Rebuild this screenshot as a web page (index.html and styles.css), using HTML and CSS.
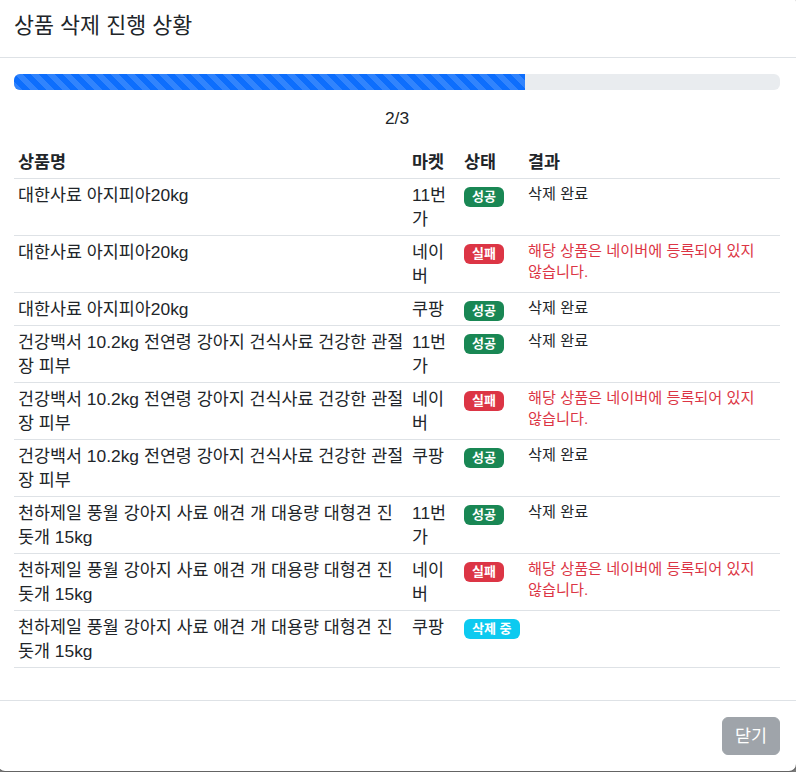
FILE: index.html
```html
<!DOCTYPE html>
<html lang="ko">
<head>
    <meta charset="UTF-8">
    <meta name="viewport" content="width=device-width, initial-scale=1.0">
    <title>상품 삭제 진행 상황</title>
    <link rel="stylesheet" href="styles.css">
</head>
<body>

    <div class="modal__content">
        <div class="modal__header">
            <h5 class="modal__title">상품 삭제 진행 상황</h5>
        </div>

        <div class="modal__body">
            <div class="progress">
                <div class="progress__bar" style="width: 66.67%"></div>
            </div>
            <div class="progress__count">2/3</div>

            <table class="result-table">
                <colgroup>
                    <col class="col-name">
                    <col class="col-market">
                    <col class="col-status">
                    <col class="col-result">
                </colgroup>
                <thead>
                    <tr>
                        <th class="cell-name">상품명</th>
                        <th>마켓</th>
                        <th>상태</th>
                        <th>결과</th>
                    </tr>
                </thead>
                <tbody>
                    <tr>
                        <td class="cell-name">대한사료 아지피아20kg</td>
                        <td>11번가</td>
                        <td><span class="badge badge--success">성공</span></td>
                        <td class="cell-result"><div class="result">삭제 완료</div></td>
                    </tr>
                    <tr>
                        <td class="cell-name">대한사료 아지피아20kg</td>
                        <td>네이버</td>
                        <td><span class="badge badge--danger">실패</span></td>
                        <td class="cell-result"><div class="result result--error">해당 상품은 네이버에 등록되어 있지 않습니다.</div></td>
                    </tr>
                    <tr>
                        <td class="cell-name">대한사료 아지피아20kg</td>
                        <td>쿠팡</td>
                        <td><span class="badge badge--success">성공</span></td>
                        <td class="cell-result"><div class="result">삭제 완료</div></td>
                    </tr>
                    <tr>
                        <td class="cell-name">건강백서 10.2kg 전연령 강아지 건식사료 건강한 관절장 피부</td>
                        <td>11번가</td>
                        <td><span class="badge badge--success">성공</span></td>
                        <td class="cell-result"><div class="result">삭제 완료</div></td>
                    </tr>
                    <tr>
                        <td class="cell-name">건강백서 10.2kg 전연령 강아지 건식사료 건강한 관절장 피부</td>
                        <td>네이버</td>
                        <td><span class="badge badge--danger">실패</span></td>
                        <td class="cell-result"><div class="result result--error">해당 상품은 네이버에 등록되어 있지 않습니다.</div></td>
                    </tr>
                    <tr>
                        <td class="cell-name">건강백서 10.2kg 전연령 강아지 건식사료 건강한 관절장 피부</td>
                        <td>쿠팡</td>
                        <td><span class="badge badge--success">성공</span></td>
                        <td class="cell-result"><div class="result">삭제 완료</div></td>
                    </tr>
                    <tr>
                        <td class="cell-name">천하제일 풍월 강아지 사료 애견 개 대용량 대형견 진돗개 15kg</td>
                        <td>11번가</td>
                        <td><span class="badge badge--success">성공</span></td>
                        <td class="cell-result"><div class="result">삭제 완료</div></td>
                    </tr>
                    <tr>
                        <td class="cell-name">천하제일 풍월 강아지 사료 애견 개 대용량 대형견 진돗개 15kg</td>
                        <td>네이버</td>
                        <td><span class="badge badge--danger">실패</span></td>
                        <td class="cell-result"><div class="result result--error">해당 상품은 네이버에 등록되어 있지 않습니다.</div></td>
                    </tr>
                    <tr>
                        <td class="cell-name">천하제일 풍월 강아지 사료 애견 개 대용량 대형견 진돗개 15kg</td>
                        <td>쿠팡</td>
                        <td><span class="badge badge--info">삭제 중</span></td>
                        <td class="cell-result"></td>
                    </tr>
                </tbody>
            </table>
        </div>

        <div class="modal__footer">
            <button class="btn btn--secondary" disabled>닫기</button>
        </div>
    </div>

</body>
</html>
```

FILE: styles.css
```css
*,
*::before,
*::after {
    box-sizing: border-box;
}

html,
body {
    overflow: hidden;
}

/* Noto hangul is ~0.92em wide, so sizes are bumped a little (17.4px ~ 16px) */
body {
    margin: 0;
    height: 100vh;
    background-color: #7a7a7a;
    font-family: 'Liberation Sans', 'Noto Sans CJK KR', sans-serif;
    font-size: 17.4px;
    line-height: 24px;
    color: #212529;
}

/* modal-lg, 800px, slightly wider than the window */
.modal__content {
    width: 800px;
    margin: -6px 0 0 -3px;
    background-color: #fff;
    background-clip: padding-box;
    border: 1px solid rgba(0, 0, 0, 0.175);
    border-radius: 8px;
}

.modal__header {
    display: flex;
    align-items: center;
    padding: 16px;
    border-bottom: 1px solid #dee2e6;
}

.modal__title {
    margin: 0;
    font-size: 21.75px;
    font-weight: 400;
    line-height: 30px;
}

.modal__body {
    padding: 16px;
}

.progress {
    display: flex;
    height: 16px;
    margin-bottom: 16px;
    overflow: hidden;
    background-color: #e9ecef;
    border-radius: 6px;
}

.progress__bar {
    background-color: #0d6efd;
    background-image: linear-gradient(45deg,
        rgba(255, 255, 255, 0.15) 25%, transparent 25%,
        transparent 50%, rgba(255, 255, 255, 0.15) 50%,
        rgba(255, 255, 255, 0.15) 75%, transparent 75%, transparent);
    background-size: 16px 16px;
}

.progress__count {
    text-align: center;
    margin-bottom: 16px;
}

.result-table {
    width: 100%;
    table-layout: fixed;
    border-collapse: collapse;
    margin-bottom: 16px;
}

.col-name { width: 394px; }
.col-market { width: 52px; }
.col-status { width: 64px; }
.col-result { width: 256px; }

.result-table th,
.result-table td {
    padding: 4px;
    text-align: left;
    border-bottom: 1px solid #dee2e6;
}

.result-table th {
    font-weight: 700;
    vertical-align: bottom;
}

.result-table td {
    vertical-align: top;
}

.result-table .cell-name {
    padding-right: 2px;
}

.result-table .cell-result {
    padding-right: 16px;
}

.result {
    font-size: 15.2px;
    line-height: 21px;
}

.result--error {
    color: #dc3545;
}

.badge {
    display: inline-block;
    padding: 4px 8px;
    font-size: 13px;
    font-weight: 700;
    line-height: 12px;
    color: #fff;
    white-space: nowrap;
    vertical-align: baseline;
    border-radius: 6px;
}

.badge--success { background-color: #198754; }
.badge--danger { background-color: #dc3545; }
.badge--info { background-color: #0dcaf0; }

.modal__footer {
    display: flex;
    justify-content: flex-end;
    align-items: center;
    padding: 12px;
    border-top: 1px solid #dee2e6;
}

.btn {
    margin: 4px;
    padding: 6px 12px;
    font-family: inherit;
    font-size: 17.4px;
    line-height: 24px;
    border: 1px solid transparent;
    border-radius: 6px;
}

.btn--secondary {
    color: #fff;
    background-color: #6c757d;
    border-color: #6c757d;
}

.btn:disabled {
    opacity: 0.65;
}
```
